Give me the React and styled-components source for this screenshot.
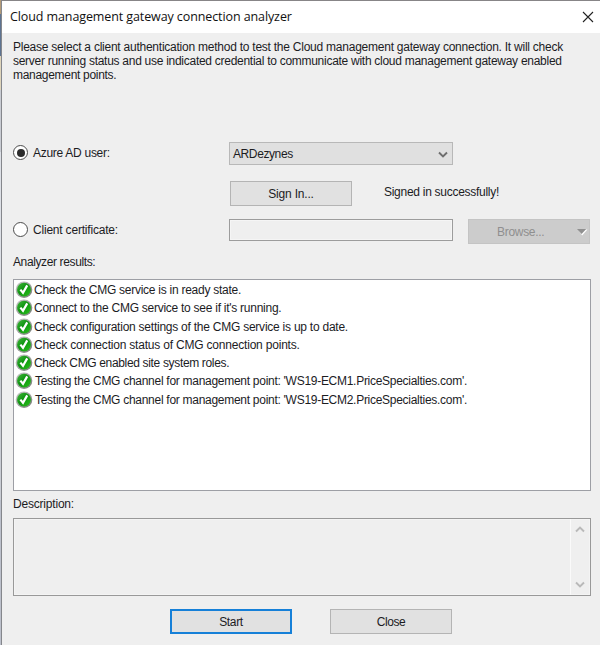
import React from 'react';
import styled, { createGlobalStyle, css } from 'styled-components';

const GlobalStyle = createGlobalStyle`
  * {
    box-sizing: border-box;
  }

  body {
    margin: 0;
    background-color: #c3c6ce;
    overflow: hidden;
  }

  button {
    font: inherit;
    color: inherit;
  }
`;

const Desktop = styled.div`
  width: 600px;
  height: 645px;
  padding-left: 1px;
  background: linear-gradient(
    #b39a77 0 14px,
    #5d7391 14px 56px,
    #dfd5bb 56px 90px,
    #c9ccd3 90px 152px,
    #dde0e6 152px 330px,
    #c9ccd3 330px 500px,
    #bcc0cb 500px
  );
`;

const Dialog = styled.main`
  display: flex;
  flex-direction: column;
  height: 645px;
  border-top: 1px solid #878587;
  border-left: 1px solid #85878c;
  background-color: #efefef;
  color: #1c1c1f;
  font-family: 'Liberation Sans', Arial, sans-serif;
  font-size: 12px;
  line-height: 14px;
`;

const TitleBar = styled.header`
  display: flex;
  align-items: center;
  justify-content: space-between;
  height: 32px;
  padding: 0 6px 0 8px;
  background-color: #ffffff;
  color: #111111;
`;

const Title = styled.h1`
  margin: 0;
  font-family: 'Open Sans', 'Noto Sans', sans-serif;
  font-size: 12.5px;
  font-weight: 400;
  line-height: 18px;
  white-space: nowrap;
  letter-spacing: -0.1px;
`;

const IconButton = styled.button`
  display: flex;
  padding: 0;
  border: 0;
  background: none;
`;

const Content = styled.div`
  display: flex;
  flex-direction: column;
  padding: 7px 9px 0 11px;
`;

const Intro = styled.p`
  height: 102px;
  margin: 0;
`;

const Text = styled.span`
  display: ${props => (props.$block ? 'block' : 'inline-block')};
  white-space: nowrap;
  line-height: ${props => props.$line || 14}px;
  letter-spacing: ${props => props.$spacing || 0}px;
`;

const FormRow = styled.div`
  display: grid;
  grid-template-columns: 216px 224px 1fr;
  align-items: start;
  height: ${props => props.$height}px;
`;

const SignInRow = styled.div`
  display: flex;
  align-items: flex-start;
  gap: 32px;
  height: 38px;
  padding-left: 217px;
`;

const RadioLabel = styled.label`
  display: flex;
  align-items: center;
  gap: 5px;
  height: 21px;
`;

const RadioMark = styled.span`
  display: flex;
  align-items: center;
  justify-content: center;
  width: 15px;
  height: 15px;
  border: 1px solid #4c4c4c;
  border-radius: 50%;
  background-color: #ffffff;

  &::after {
    content: '';
    width: 8px;
    height: 8px;
    border-radius: 50%;
    background-color: ${props => (props.$checked ? '#2b2b2b' : 'transparent')};
  }
`;

const Select = styled.div`
  display: flex;
  align-items: center;
  justify-content: space-between;
  height: 23px;
  padding: 1px 4px 0 3px;
  border: 1px solid #b8b8b8;
  background-color: #e0e0e0;
`;

const Field = styled.div`
  height: 22px;
  border: 1px solid #9c9c9c;
  background-color: #efefef;
  box-shadow: inset 0 0 0 1px #f5f5f5;
`;

const Button = styled.button`
  display: flex;
  align-items: center;
  justify-content: center;
  width: 122px;
  height: 25px;
  padding: 0;
  border: 1px solid #b4b4b4;
  background-color: #e1e1e1;

  ${props =>
    props.$primary &&
    css`
      border: 2px solid #1680d8;
    `}
`;

const Status = styled.div`
  padding-top: 4px;
`;

const BrowseButton = styled(Button)`
  justify-content: space-between;
  margin-left: 15px;
  padding: 0 1px 0 28px;
  border-color: #c4c4c4;
  background-color: #cccccc;
  color: #8f8f8f;
`;

const SectionLabel = styled.div`
  height: ${props => props.$height}px;
`;

const Results = styled.ul`
  height: 212px;
  width: 578px;
  margin: 0;
  padding: 1px 0 0 1px;
  border: 1px solid #9d9fa5;
  background-color: #ffffff;
  list-style: none;
`;

const Result = styled.li`
  display: flex;
  align-items: center;
  gap: ${props => props.$gap || 1}px;
  height: 18.25px;
`;

const Description = styled.div`
  display: flex;
  justify-content: flex-end;
  width: 578px;
  height: 78px;
  border: 1px solid #999999;
  box-shadow: inset 0 0 0 1px #f4f4f4;
`;

const ScrollBar = styled.div`
  display: flex;
  flex-direction: column;
  align-items: center;
  justify-content: space-between;
  width: 20px;
  padding: 7px 2px 7px 0;
  border-left: 1px solid #fafafa;
`;

const Actions = styled.footer`
  display: flex;
  gap: 38px;
  padding: 13px 0 0 157px;
`;

const Chevron = ({ up, color }) => (
  <svg width="10" height="7" viewBox="0 0 10 7">
    <path
      d={up ? 'M1 5.5 5 1.5 9 5.5' : 'M1 1.5 5 5.5 9 1.5'}
      fill="none"
      stroke={color}
      strokeWidth="1.9"
    />
  </svg>
);

const CloseIcon = () => (
  <svg width="12" height="12" viewBox="0 0 12 12">
    <path d="M1 1 11 11M11 1 1 11" stroke="#222222" strokeWidth="1.1" />
  </svg>
);

const DropArrow = () => (
  <svg width="12" height="8" viewBox="0 0 12 8">
    <path d="M2 1.5H11.5L6.2 7.5Z" fill="#ffffff" />
    <path d="M1 1H10.2L5.6 6Z" fill="#909090" />
  </svg>
);

const SuccessIcon = () => (
  <svg width="18" height="18" viewBox="0 0 18 18">
    <defs>
      <linearGradient id="ring" x1="0" y1="0" x2="1" y2="1">
        <stop offset="0" stopColor="#cfcfcf" />
        <stop offset="1" stopColor="#6f756f" />
      </linearGradient>
      <linearGradient id="disc" x1="0" y1="0" x2="1" y2="1">
        <stop offset="0" stopColor="#46b840" />
        <stop offset="0.45" stopColor="#0e9410" />
        <stop offset="1" stopColor="#2cc41c" />
      </linearGradient>
    </defs>
    <circle cx="9" cy="8.7" r="8.3" fill="url(#ring)" />
    <circle cx="9" cy="8.7" r="6.9" fill="url(#disc)" />
    <path
      d="M5.4 8.6 8 11.8 12.2 4.4"
      fill="none"
      stroke="#ffffff"
      strokeWidth="2.2"
    />
  </svg>
);

const intro = [
  {
    text:
      'Please select a client authentication method to test the Cloud management gateway connection. It will check',
    spacing: -0.24,
  },
  {
    text:
      'server running status and use indicated credential to communicate with cloud management gateway enabled',
    spacing: -0.275,
  },
  { text: 'management points.', spacing: -0.3 },
];

const results = [
  { text: 'Check the CMG service is in ready state.', spacing: -0.26 },
  {
    text: "Connect to the CMG service to see if it's running.",
    spacing: -0.26,
  },
  {
    text: 'Check configuration settings of the CMG service is up to date.',
    spacing: -0.24,
  },
  {
    text: 'Check connection status of CMG connection points.',
    spacing: -0.2,
  },
  { text: 'Check CMG enabled site system roles.', spacing: -0.34 },
  {
    text:
      "Testing the CMG channel for management point: 'WS19-ECM1.PriceSpecialties.com'.",
    spacing: -0.28,
    gap: 2,
  },
  {
    text:
      "Testing the CMG channel for management point: 'WS19-ECM2.PriceSpecialties.com'.",
    spacing: -0.28,
    gap: 2,
  },
];

const App = () => (
  <>
    <GlobalStyle />
    <Desktop>
      <Dialog>
        <TitleBar>
          <Title>Cloud management gateway connection analyzer</Title>
          <IconButton aria-label="Close">
            <CloseIcon />
          </IconButton>
        </TitleBar>
        <Content>
          <Intro>
            {intro.map(line => (
              <Text key={line.text} $block $spacing={line.spacing}>
                {line.text}
              </Text>
            ))}
          </Intro>
          <FormRow $height={39}>
            <RadioLabel>
              <RadioMark $checked />
              <Text $spacing={-0.28}>Azure AD user:</Text>
            </RadioLabel>
            <Select>
              <Text $spacing={-0.4}>ARDezynes</Text>
              <Chevron color="#6e6e6e" />
            </Select>
          </FormRow>
          <SignInRow>
            <Button>
              <Text $spacing={-0.2}>Sign In...</Text>
            </Button>
            <Status>
              <Text $spacing={-0.28}>Signed in successfully!</Text>
            </Status>
          </SignInRow>
          <FormRow $height={36}>
            <RadioLabel>
              <RadioMark />
              <Text $spacing={-0.2}>Client certificate:</Text>
            </RadioLabel>
            <Field />
            <BrowseButton disabled>
              <Text $spacing={-0.3}>Browse...</Text>
              <DropArrow />
            </BrowseButton>
          </FormRow>
          <SectionLabel $height={24}>
            <Text $spacing={-0.38}>Analyzer results:</Text>
          </SectionLabel>
          <Results>
            {results.map(result => (
              <Result key={result.text} $gap={result.gap}>
                <SuccessIcon />
                <Text $spacing={result.spacing}>{result.text}</Text>
              </Result>
            ))}
          </Results>
          <SectionLabel $height={27}>
            <Text $spacing={-0.2} $line={26}>
              Description:
            </Text>
          </SectionLabel>
          <Description>
            <ScrollBar>
              <Chevron up color="#b9b9b9" />
              <Chevron color="#b9b9b9" />
            </ScrollBar>
          </Description>
          <Actions>
            <Button $primary>
              <Text $spacing={-0.35}>Start</Text>
            </Button>
            <Button>
              <Text $spacing={-0.4}>Close</Text>
            </Button>
          </Actions>
        </Content>
      </Dialog>
    </Desktop>
  </>
);

export default App;
